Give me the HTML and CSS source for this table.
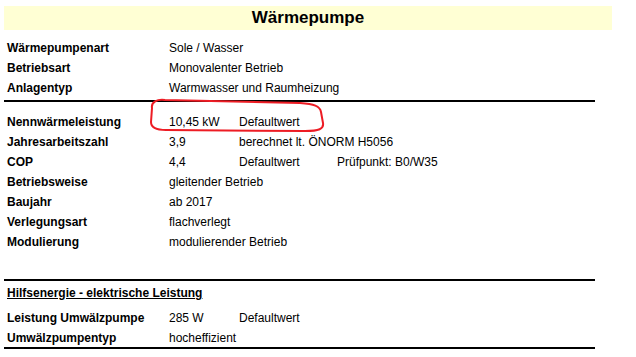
FILE: index.html
```html
<!DOCTYPE html>
<html>
    <head>
        <meta charset="UTF-8">
        <title>Wärmepumpe</title>
        <link rel="stylesheet" href="styles.css">
    </head>
    <body>
        <div class="sheet">
            <h1 class="band">Wärmepumpe</h1>

            <div class="block block-top">
                <div class="row"><span class="lbl">Wärmepumpenart</span><span class="val span-3">Sole / Wasser</span></div>
                <div class="row"><span class="lbl">Betriebsart</span><span class="val span-3">Monovalenter Betrieb</span></div>
                <div class="row"><span class="lbl">Anlagentyp</span><span class="val span-3">Warmwasser und Raumheizung</span></div>
            </div>

            <div class="block block-mid">
                <div class="row"><span class="lbl">Nennwärmeleistung</span><span class="val">10,45 kW</span><span class="val">Defaultwert</span></div>
                <div class="row"><span class="lbl">Jahresarbeitszahl</span><span class="val">3,9</span><span class="val span-2">berechnet lt. ÖNORM H5056</span></div>
                <div class="row"><span class="lbl">COP</span><span class="val">4,4</span><span class="val">Defaultwert</span><span class="val">Prüfpunkt: B0/W35</span></div>
                <div class="row"><span class="lbl">Betriebsweise</span><span class="val span-3">gleitender Betrieb</span></div>
                <div class="row"><span class="lbl">Baujahr</span><span class="val span-3">ab 2017</span></div>
                <div class="row"><span class="lbl">Verlegungsart</span><span class="val span-3">flachverlegt</span></div>
                <div class="row"><span class="lbl">Modulierung</span><span class="val span-3">modulierender Betrieb</span></div>

                <!-- hand-drawn marker around the rated output -->
                <svg class="marker" width="180" height="36" viewBox="148 98 180 36">
                    <path d="M152,108 C151,102 157,99 165,100 L300,103 C314,104 320,106 321,112 L323,123 C324,129 319,131 305,131 L166,130 C156,130 151,128 151,122 Z"
                          fill="none" stroke="#ed1c24" stroke-width="2" stroke-linejoin="round"/>
                </svg>
            </div>

            <div class="block block-aux">
                <div class="row row-head"><span class="lbl sub">Hilfsenergie - elektrische Leistung</span></div>
                <div class="row"><span class="lbl">Leistung Umwälzpumpe</span><span class="val">285 W</span><span class="val">Defaultwert</span></div>
                <div class="row row-last"><span class="lbl">Umwälzpumpentyp</span><span class="val span-3">hocheffizient</span></div>
            </div>
        </div>
    </body>
</html>
```

FILE: styles.css
```css
body {
    font-family: "Liberation Sans", Arial, Helvetica, sans-serif;
    font-size: 12px;
    margin: 0;
    padding: 0;
    color: #000;
    background: #fff;
}
.sheet {
    padding-top: 6px;
}
.band {
    margin: 0 24px 0 4px;
    height: 24px;
    line-height: 24px;
    background: #ffffd4;
    font-size: 17px;
    font-weight: bold;
    text-align: center;
}
.block {
    position: relative;
    width: 591px;
    margin-left: 4px;
    border-bottom: 2px solid #000;
}
.block-top {
    margin-top: 8px;
    padding-bottom: 2px;
}
.block-mid {
    padding-top: 10px;
    padding-bottom: 27px;
}
.block-aux {
    padding-top: 2px;
    padding-bottom: 0;
}
.row {
    display: grid;
    grid-template-columns: 162px 70px 98px auto;
    height: 20px;
    line-height: 20px;
    padding-left: 3px;
    white-space: nowrap;
}
.row-head {
    margin-bottom: 5px;
}
.row-last {
    height: 19px;
}
.lbl {
    font-weight: bold;
}
.sub {
    grid-column: span 4;
    text-decoration: underline;
}
.span-2 {
    grid-column: span 2;
}
.span-3 {
    grid-column: span 3;
}
.marker {
    position: absolute;
    left: 144px;
    top: -4px;
    overflow: visible;
}
```
